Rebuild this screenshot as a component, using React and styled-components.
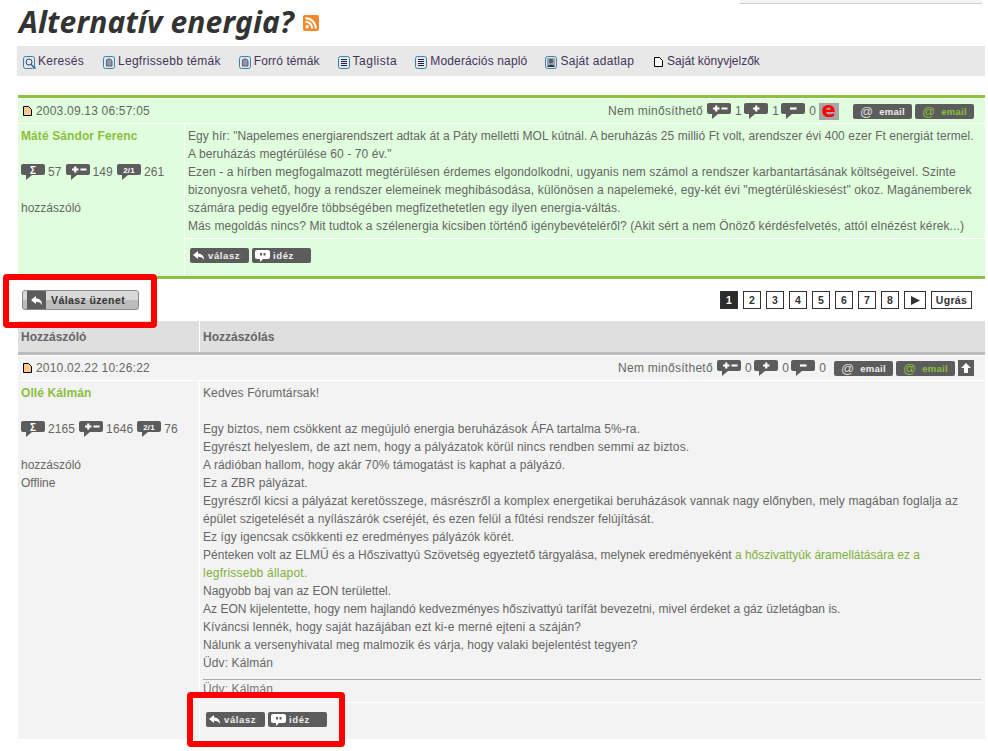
import React from "react";
import styled, { createGlobalStyle } from "styled-components";

const Global = createGlobalStyle`
  html, body { margin: 0; padding: 0; background: #fff; }
  body { font-family: "Liberation Sans", Arial, sans-serif; font-size: 12px; color: #666; }
  #root { width: 988px; height: 751px; overflow: hidden; }
`;

const Page = styled.div`
  position: relative;
  width: 988px;
  height: 751px;
  overflow: hidden;
  padding-left: 18px;
  box-sizing: border-box;
`;
const TopStub = styled.div`
  height: 4px;
  width: 242px;
  margin-left: 722px;
  background: #f4f4f4;
  border-bottom: 1px solid #ccc;
  box-sizing: border-box;
`;
const TitleRow = styled.div`
  display: flex;
  align-items: center;
  gap: 9px;
  height: 42px;
  padding-bottom: 4px;
  box-sizing: border-box;
  margin-left: 1px;
`;
const Title = styled.h1`
  margin: -2px 0 0;
  font: italic bold 30px/36px "Noto Sans", sans-serif;
  letter-spacing: 0.15px;
  color: #333;
  white-space: nowrap;
`;
const Nav = styled.nav`
  display: flex;
  align-items: center;
  height: 30px;
  width: 968px;
  margin-left: -1px;
  background: #e8e8e8;
  padding-left: 6px;
  box-sizing: border-box;
`;
const NavItem = styled.span`
  display: inline-flex;
  align-items: center;
  gap: ${(p) => p.$ig}px;
  margin-right: ${(p) => p.$gap}px;
  font-size: 12px;
  letter-spacing: ${(p) => p.$ls}px;
  color: #44345a;
  white-space: nowrap;
  svg { margin-top: 2px; }
`;
const Post = styled.section`
  margin-top: ${(p) => p.$top}px;
  width: 967px;
  background: ${(p) => p.$bg};
  border-top: ${(p) => p.$rule};
  border-bottom: ${(p) => p.$end};
`;
const PostHead = styled.header`
  display: flex;
  align-items: center;
  justify-content: space-between;
  height: 26px;
  box-sizing: border-box;
  border-top: 1px solid #fff;
  border-bottom: 1px solid #fff;
  padding: 0 11px 0 5px;
`;
const Stamp = styled.span`
  display: inline-flex;
  align-items: center;
  gap: 4px;
  font-size: 12px;
  letter-spacing: 0.2px;
  color: #666;
`;
const Meta = styled.div`
  display: flex;
  align-items: center;
  gap: 4px;
  color: #666;
`;
const RateLabel = styled.span`
  letter-spacing: 0.28px;
`;
const Rate = styled.span`
  margin-right: -1.5px;
`;
const EBadge = styled.span`
  display: block;
  width: 20px;
  height: 17px;
  background: #a6a6a6;
  color: #f00;
  font: bold 21px/15px "DejaVu Sans", sans-serif;
  text-align: center;
`;
const MailGroup = styled.div`
  display: flex;
  gap: 3px;
`;
const Spacer = styled.span`
  width: ${(p) => p.$w}px;
`;
const Btn = styled.span`
  display: inline-flex;
  align-items: center;
  gap: ${(p) => p.$gap || 3}px;
  width: 59px;
  height: 15px;
  box-sizing: border-box;
  padding-left: ${(p) => p.$pl || 3}px;
  background: #5c5c5c;
  border-radius: 2px;
  font: bold 9.5px/15px "Liberation Sans", sans-serif;
  letter-spacing: ${(p) => p.$ls || 0.6}px;
  color: ${(p) => p.$c || "#eee"};
`;
const AtSign = styled.span`
  font: 13px/13px "Liberation Sans", sans-serif;
  letter-spacing: 0;
  color: ${(p) => p.$c || "#ddd"};
`;
const TopArrow = styled.span`
  display: flex;
  align-items: center;
  justify-content: center;
  width: 16px;
  height: 16px;
  background: #5c5c5c;
  margin-left: -1px;
`;
const PostBody = styled.div`
  display: grid;
  grid-template-columns: ${(p) => p.$col}px 1fr;
  min-height: ${(p) => p.$h}px;
`;
const Side = styled.aside`
  border-right: 1px solid #fff;
  padding: 3px 0 0 3px;
  line-height: 18px;
`;
const Author = styled.div`
  font-weight: bold;
  color: #8bbf3f;
  letter-spacing: 0.1px;
  height: 36px;
`;
const Stats = styled.div`
  display: flex;
  align-items: center;
  gap: 3px;
  height: 18px;
  margin-bottom: 18px;
  letter-spacing: 0.1px;
`;
const StatNum = styled.span`
  margin-right: 1px;
`;
const Main = styled.div`
  display: flex;
  flex-direction: column;
`;
const Content = styled.div`
  padding: 3px 0 3px 3px;
  line-height: 18px;
  color: #666;
  white-space: nowrap;
  flex: 1;
`;
const Line = styled.div`
  height: 18px;
  letter-spacing: ${(p) => p.$ls}px;
`;
const GreenLink = styled.span`
  color: #7fb03a;
`;
const Sig = styled.div`
  margin: 7px 4px 0 0;
  border-top: 1px solid #aaa;
  height: 16px;
  line-height: 18px;
  letter-spacing: 0.115px;
  color: #777;
`;
const Actions = styled.div`
  display: flex;
  gap: 3px;
  align-items: flex-start;
  border-top: 1px solid #fff;
  height: ${(p) => p.$h}px;
  padding: 9px 0 0 ${(p) => p.$pl}px;
  box-sizing: border-box;
  flex: none;
`;
const ActionBar = styled.div`
  display: flex;
  align-items: center;
  justify-content: space-between;
  height: 42px;
  width: 967px;
  padding: 0 13px 0 4px;
  box-sizing: border-box;
`;
const ReplyBtn = styled.span`
  display: flex;
  align-items: center;
  width: 117px;
  height: 20px;
  box-sizing: border-box;
  border: 1px solid #8a8a8a;
  border-radius: 3px;
  overflow: hidden;
  background: linear-gradient(#d8d8d8 0 50%, #bcbcbc 50% 100%);
  font: bold 10.5px/18px "Liberation Sans", sans-serif;
  letter-spacing: 0.4px;
  color: #333;
`;
const ReplyIcon = styled.span`
  display: flex;
  align-items: center;
  justify-content: center;
  width: 19px;
  height: 100%;
  margin-left: 4px;
  margin-right: 5px;
  background: #5c5c5c;
`;
const Pager = styled.div`
  display: flex;
  gap: 5px;
`;
const PageBox = styled.span`
  display: flex;
  align-items: center;
  justify-content: center;
  width: ${(p) => p.$w || 18}px;
  height: 18px;
  box-sizing: border-box;
  border: 1px solid #333;
  background: ${(p) => (p.$on ? "#2b2b2b" : "#fff")};
  color: ${(p) => (p.$on ? "#fff" : "#333")};
  font: bold 10.5px "Liberation Sans", sans-serif;
  letter-spacing: 0.3px;
`;
const TableHead = styled.div`
  display: grid;
  grid-template-columns: 182px 1fr;
  width: 967px;
  height: 31px;
  background: #dfdfdf;
  border-bottom: 3px solid #bbb;
  box-sizing: content-box;
  font-weight: bold;
  color: #666;
`;
const HeadCell = styled.div`
  display: flex;
  align-items: center;
  padding-left: 3px;
  border-right: ${(p) => (p.$div ? "1px solid #fff" : "none")};
`;
const Callout = styled.div`
  position: absolute;
  left: ${(p) => p.$x}px;
  top: ${(p) => p.$y}px;
  width: ${(p) => p.$w}px;
  height: ${(p) => p.$h}px;
  box-sizing: border-box;
  border: 6px solid #f00;
  border-radius: 4px;
  pointer-events: none;
`;
const BubbleText = styled.text`
  fill: #fff;
  font: bold ${(p) => p.$s}px "Liberation Sans", sans-serif;
  text-anchor: middle;
`;

const Bubble = ({ w = 24, kind }) => (
  <svg width={w} height="17" viewBox={`0 0 ${w} 17`} style={{ flex: "none" }}>
    <path
      d={`M2 0H${w - 2}a2 2 0 0 1 2 2V9a2 2 0 0 1-2 2H11L5 16V11H2a2 2 0 0 1-2-2V2a2 2 0 0 1 2-2Z`}
      fill="#5c5c5c"
    />
    {kind === "pm" && (
      <path d="M6 5.500h6.500M9.250 2.500v6M14.500 5.500h6" stroke="#fff" strokeWidth="2.2" />
    )}
    {kind === "p" && <path d="M9 5.500h6.500M12.250 2.500v6" stroke="#fff" strokeWidth="2.2" />}
    {kind === "m" && <path d="M9 5.500h6.500" stroke="#fff" strokeWidth="2.2" />}
    {kind === "s" && <BubbleText x="12" y="9.500" $s={10}>Σ</BubbleText>}
    {kind === "r" && <BubbleText x="12" y="8.500" $s={8}>2/1</BubbleText>}
  </svg>
);
const ReplyArrow = () => (
  <svg width="11" height="9" viewBox="0 0 11 9">
    <path d="M0 4L5 0V2.400C9 2.400 11 5 11 9C9.600 6.600 8 5.800 5 5.800V8Z" fill="#fff" />
  </svg>
);
const QuoteIcon = () => (
  <svg width="15" height="12" viewBox="0 0 15 12">
    <path d="M2 0H13a2 2 0 0 1 2 2V7a2 2 0 0 1-2 2H8L5 12V9H2a2 2 0 0 1-2-2V2a2 2 0 0 1 2-2Z" fill="#fff" />
    <path d="M5 3h2v2.500H5zM8.500 3h2v2.500h-2z" fill="#5c5c5c" />
  </svg>
);
const PageIcon = () => (
  <svg width="9" height="10" viewBox="0 0 9 10">
    <path d="M.5.5H5.500L8.500 3.500V9.500H.5Z" fill="#fdc98f" stroke="#000" />
  </svg>
);
const WhitePage = () => (
  <svg width="9" height="10" viewBox="0 0 9 10">
    <path d="M.5.5H5.500L8.500 3.500V9.500H.5Z" fill="#fff" stroke="#000" />
  </svg>
);
const Rss = () => (
  <svg width="16" height="16" viewBox="0 0 16 16">
    <rect width="16" height="16" rx="2" fill="#f08a2c" />
    <circle cx="4.200" cy="11.800" r="1.700" fill="#fff" />
    <path d="M2.500 6.800a6.700 6.700 0 0 1 6.700 6.700M2.500 3.200a10.300 10.300 0 0 1 10.300 10.300" stroke="#fff" strokeWidth="2" fill="none" />
  </svg>
);
const NavIcon = ({ kind }) => (
  <svg width="13" height="13" viewBox="0 0 13 13">
    <rect x=".5" y=".5" width="11" height="12" rx="2" fill="#dce8f2" stroke="#3f7fa8" />
    {kind === "search" && (
      <g fill="none">
        <circle cx="6" cy="6" r="3" stroke="#445" />
        <path d="M8 8.500L12.500 12.500" stroke="#2d5f88" strokeWidth="1.500" />
      </g>
    )}
    {kind === "doc" && <path d="M4.500 3h3L9 5v5H3.500V4Z" fill="#8c9aa6" stroke="#445" strokeWidth=".8" />}
    {kind === "list" && (
      <path d="M3 3.500h6M3 5.500h6M3 7.500h6M3 9.500h6" stroke="#223" strokeWidth="1" />
    )}
    {kind === "user" && (
      <g>
        <rect x="2" y="2" width="8" height="9" fill="#8aa5bc" />
        <circle cx="6" cy="5" r="2.200" fill="#6b5a4a" />
        <path d="M2.500 11c0-3 7-3 7 0Z" fill="#333" />
      </g>
    )}
  </svg>
);

const navItems = [
  ["search", "Keresés", 19, 0.28],
  ["doc", "Legfrissebb témák", 18, 0.28],
  ["doc", "Forró témák", 18, 0.1],
  ["list", "Taglista", 18, 0.5],
  ["list", "Moderációs napló", 18, 0.15],
  ["user", "Saját adatlap", 20, 0.28],
];

const LS = 0.115;
const post1 = [
  ['Egy hír: "Napelemes energiarendszert adtak át a Páty melletti MOL kútnál. A beruházás 25 millió Ft volt, arendszer évi 400 ezer Ft energiát termel.', 0.055],
  ['A beruházás megtérülése 60 - 70 év."', LS],
  ["Ezen - a hírben megfogalmazott megtérülésen érdemes elgondolkodni, ugyanis nem számol a rendszer karbantartásának költségeivel. Szinte", LS],
  ['bizonyosra vehető, hogy a rendszer elemeinek meghibásodása, különösen a napelemeké, egy-két évi "megtérüléskiesést" okoz. Magánemberek', LS],
  ["számára pedig egyelőre többségében megfizethetetlen egy ilyen energia-váltás.", 0.1],
  ["Más megoldás nincs? Mit tudtok a szélenergia kicsiben történő igénybevételéről? (Akit sért a nem Önöző kérdésfelvetés, attól elnézést kérek...)", 0.1],
];
const post2 = [
  ["Kedves Fórumtársak!", LS],
  ["\u00a0", LS],
  ["Egy biztos, nem csökkent az megújuló energia beruházások ÁFA tartalma 5%-ra.", 0.09],
  ["Egyrészt helyeslem, de azt nem, hogy a pályázatok körül nincs rendben semmi az biztos.", 0.14],
  ["A rádióban hallom, hogy akár 70% támogatást is kaphat a pályázó.", LS],
  ["Ez a ZBR pályázat.", LS],
  ["Egyrészről kicsi a pályázat keretösszege, másrészről a komplex energetikai beruházások vannak nagy előnyben, mely magában foglalja az", LS],
  ["épület szigetelését a nyílászárók cseréjét, és ezen felül a fűtési rendszer felújítását.", 0.09],
  ["Ez így igencsak csökkenti ez eredményes pályázók körét.", 0.08],
  [<>Pénteken volt az ELMŰ és a Hőszivattyú Szövetség egyeztető tárgyalása, melynek eredményeként <GreenLink>a hőszivattyúk áramellátására ez a</GreenLink></>, 0.01],
  [<GreenLink>legfrissebb állapot.</GreenLink>, 0.22],
  ["Nagyobb baj van az EON területtel.", 0],
  ["Az EON kijelentette, hogy nem hajlandó kedvezményes hőszivattyú tarífát bevezetni, mivel érdeket a gáz üzletágban is.", 0.015],
  ["Kíváncsi lennék, hogy saját hazájában ezt ki-e merné ejteni a száján?", LS],
  ["Nálunk a versenyhivatal meg malmozik és várja, hogy valaki bejelentést tegyen?", 0.09],
  ["Üdv: Kálmán", LS],
];

const Mail = () => (
  <MailGroup>
    <Btn $pl={7} $ls={0.3} $gap={6}><AtSign>@</AtSign>email</Btn>
    <Btn $pl={7} $ls={0.3} $gap={6} $c="#8bbf3f"><AtSign $c="#8bbf3f">@</AtSign>email</Btn>
  </MailGroup>
);
const ReplyActions = () => (
  <>
    <Btn $gap={4}><ReplyArrow />válasz</Btn>
    <Btn><QuoteIcon />idéz</Btn>
  </>
);
const Lines = ({ items }) =>
  items.map(([t, ls], i) => <Line key={i} $ls={ls}>{t}</Line>);

export default function App() {
  return (
    <Page>
      <Global />
      <TopStub />
      <TitleRow>
        <Title>Alternatív energia?</Title>
        <Rss />
      </TitleRow>
      <Nav>
        {navItems.map(([k, t, g, ls]) => (
          <NavItem key={t} $gap={g} $ig={2} $ls={ls}>
            <NavIcon kind={k} />
            {t}
          </NavItem>
        ))}
        <NavItem $gap={0} $ig={4} $ls={0}>
          <WhitePage />
          Saját könyvjelzők
        </NavItem>
      </Nav>

      <Post $top={19} $bg="#e0fedd" $rule="3px solid #8bc140" $end="3px solid #8bc140">
        <PostHead>
          <Stamp><PageIcon />2003.09.13 06:57:05</Stamp>
          <Meta>
            <RateLabel>Nem minősíthető</RateLabel>
            <Bubble kind="pm" /><Rate>1</Rate>
            <Bubble kind="p" /><Rate>1</Rate>
            <Bubble kind="m" /><Rate>0</Rate>
            <EBadge>e</EBadge>
            <Spacer $w={6.5} />
            <Mail />
          </Meta>
        </PostHead>
        <PostBody $col={167} $h={152}>
          <Side>
            <Author>Máté Sándor Ferenc</Author>
            <Stats>
              <Bubble kind="s" /><StatNum>57</StatNum>
              <Bubble kind="pm" /><StatNum>149</StatNum>
              <Bubble kind="r" />261
            </Stats>
            hozzászóló
          </Side>
          <Main>
            <Content><Lines items={post1} /></Content>
            <Actions $h={38} $pl={5}><ReplyActions /></Actions>
          </Main>
        </PostBody>
      </Post>

      <ActionBar>
        <ReplyBtn>
          <ReplyIcon><ReplyArrow /></ReplyIcon>
          Válasz üzenet
        </ReplyBtn>
        <Pager>
          <PageBox $on>1</PageBox>
          {[2, 3, 4, 5, 6, 7, 8].map((n) => <PageBox key={n}>{n}</PageBox>)}
          <PageBox $w={22}>
            <svg width="9" height="9" viewBox="0 0 9 9"><path d="M0 0L9 4.500L0 9Z" fill="#333" /></svg>
          </PageBox>
          <PageBox $w={41}>Ugrás</PageBox>
        </Pager>
      </ActionBar>

      <TableHead>
        <HeadCell $div>Hozzászóló</HeadCell>
        <HeadCell>Hozzászólás</HeadCell>
      </TableHead>

      <Post $top={0} $bg="#f3f3f3" $rule="none" $end="none">
        <PostHead>
          <Stamp><PageIcon />2010.02.22 10:26:22</Stamp>
          <Meta>
            <RateLabel>Nem minősíthető</RateLabel>
            <Bubble kind="pm" /><Rate>0</Rate>
            <Bubble kind="p" /><Rate>0</Rate>
            <Bubble kind="m" /><Rate>0</Rate>
            <Spacer $w={1.5} />
            <Mail />
            <TopArrow>
              <svg width="10" height="10" viewBox="0 0 10 10"><path d="M5 0L10 5H7V10H3V5H0Z" fill="#fff" /></svg>
            </TopArrow>
          </Meta>
        </PostHead>
        <PostBody $col={182} $h={358}>
          <Side>
            <Author>Ollé Kálmán</Author>
            <Stats>
              <Bubble kind="s" /><StatNum>2165</StatNum>
              <Bubble kind="pm" /><StatNum>1646</StatNum>
              <Bubble kind="r" />76
            </Stats>
            hozzászóló<br />Offline
          </Side>
          <Main>
            <Content>
              <Lines items={post2} />
              <Sig>Üdv: Kálmán</Sig>
            </Content>
            <Actions $h={37} $pl={6}><ReplyActions /></Actions>
          </Main>
        </PostBody>
      </Post>

      <Callout $x={3} $y={274} $w={154} $h={54} />
      <Callout $x={187} $y={692} $w={158} $h={55} />
    </Page>
  );
}
